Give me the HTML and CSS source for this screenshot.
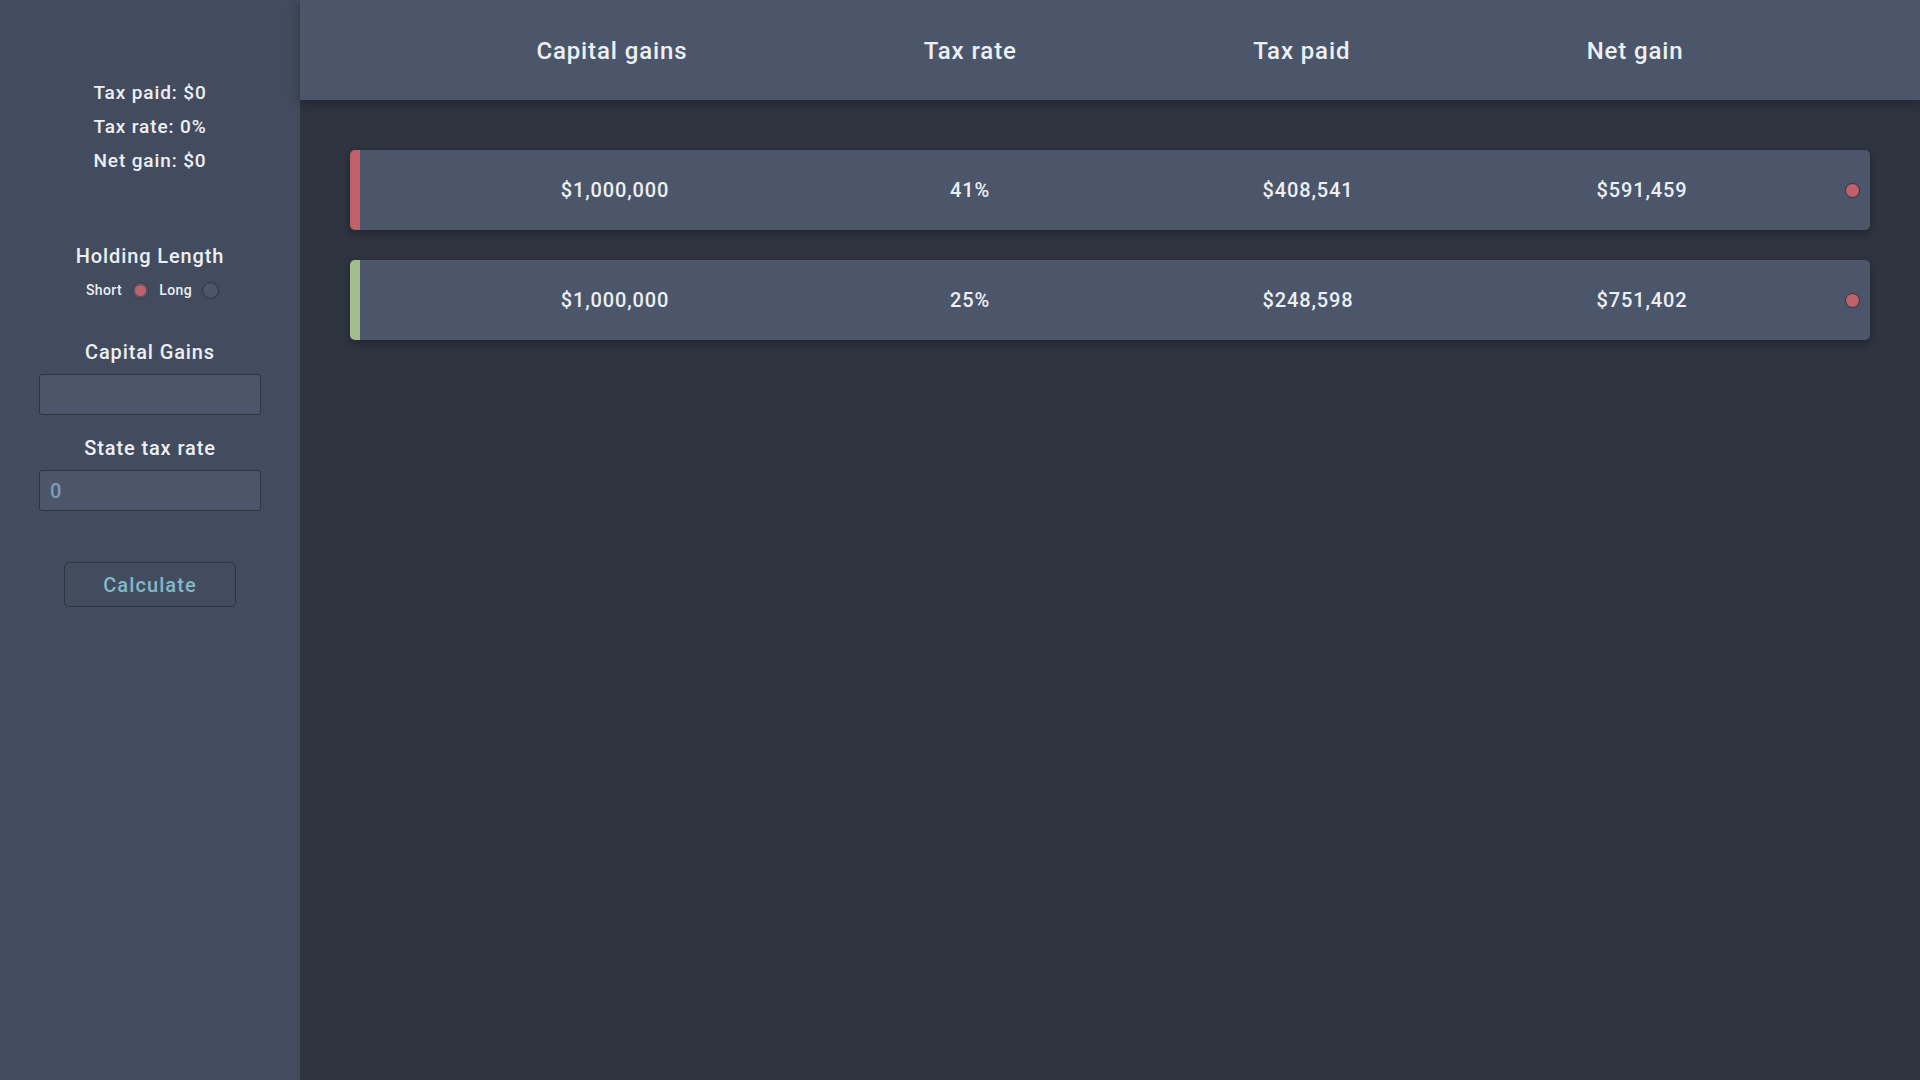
FILE: index.html
```html
<!DOCTYPE html>
<html lang="en">
<head>
<meta charset="utf-8">
<title>Capital Gains Calculator</title>
<link rel="stylesheet" href="styles.css">
</head>
<body>
<div class="app">
  <aside class="sidebar">
    <div class="stats">
      <p class="stat">Tax paid: $0</p>
      <p class="stat">Tax rate: 0%</p>
      <p class="stat">Net gain: $0</p>
    </div>
    <h3 class="label holding-title">Holding Length</h3>
    <div class="radio-row">
      <span class="radio-text">Short</span>
      <span class="radio checked"></span>
      <span class="radio-text">Long</span>
      <span class="radio"></span>
    </div>
    <h3 class="label gains-title">Capital Gains</h3>
    <input class="field" type="text" value="">
    <h3 class="label state-title">State tax rate</h3>
    <input class="field" type="text" value="0">
    <button class="calc-btn" type="button">Calculate</button>
  </aside>
  <main class="content">
    <header class="table-head">
      <span class="head-cell">Capital gains</span>
      <span class="head-cell">Tax rate</span>
      <span class="head-cell">Tax paid</span>
      <span class="head-cell">Net gain</span>
    </header>
    <section class="rows">
      <div class="row short">
        <span class="cell">$1,000,000</span>
        <span class="cell">41%</span>
        <span class="cell">$408,541</span>
        <span class="cell">$591,459</span>
        <span class="dot-cell"><span class="dot"></span></span>
      </div>
      <div class="row long">
        <span class="cell">$1,000,000</span>
        <span class="cell">25%</span>
        <span class="cell">$248,598</span>
        <span class="cell">$751,402</span>
        <span class="dot-cell"><span class="dot"></span></span>
      </div>
    </section>
  </main>
</div>
</body>
</html>
```

FILE: styles.css
```css
* { box-sizing: border-box; }

html, body {
  margin: 0;
  padding: 0;
  height: 100%;
}

body {
  font-family: Roboto, "Liberation Sans", sans-serif;
  font-weight: 500;
  letter-spacing: 0.055em;
  color: #eceff4;
  background: #2e3440;
}

.app {
  display: flex;
  height: 100vh;
}

/* Sidebar */
.sidebar {
  width: 300px;
  flex: 0 0 300px;
  background: #434c5e;
  display: flex;
  flex-direction: column;
  align-items: center;
  padding-top: 76px;
}

.stats {
  display: flex;
  flex-direction: column;
  align-items: center;
}

.stat {
  margin: 0;
  font-size: 19px;
  line-height: 34px;
}

.label {
  margin: 0;
  font-size: 20px;
  font-weight: 500;
  line-height: 26px;
}

.holding-title { margin-top: 65px; }
.gains-title { margin-top: 39px; }
.state-title { margin-top: 20px; }

.radio-row {
  margin-top: 11px;
  height: 20px;
  display: flex;
  align-items: center;
  gap: 10px;
  padding-left: 5px;
}

.radio-text {
  font-size: 14px;
  letter-spacing: 0.03em;
}

.radio {
  width: 17px;
  height: 17px;
  border-radius: 50%;
  border: 1px solid #2e3440;
  background: #4c566a;
}

.radio.checked {
  background: #bf616a;
  box-shadow: inset 0 0 0 2px #4c566a;
}

.field {
  margin-top: 9px;
  width: 222px;
  height: 41px;
  background: #4c566a;
  border: 1px solid #2e3440;
  border-radius: 3px;
  padding: 0 10px;
  font-family: Roboto, "Liberation Sans", sans-serif;
  font-weight: 500;
  font-size: 20px;
  letter-spacing: 0.055em;
  color: #7f9bbc;
  outline: none;
}

.calc-btn {
  margin-top: 51px;
  width: 172px;
  height: 45px;
  background: transparent;
  border: 1px solid #2e3440;
  border-radius: 5px;
  font-family: Roboto, "Liberation Sans", sans-serif;
  font-weight: 500;
  font-size: 20px;
  letter-spacing: 0.055em;
  color: #84b8c9;
  cursor: pointer;
}

/* Main */
.content {
  flex: 1;
  display: flex;
  flex-direction: column;
  background: #2e3440;
}

.table-head {
  height: 100px;
  flex: 0 0 100px;
  padding-top: 2px;
  background: #4c566a;
  display: flex;
  align-items: center;
  justify-content: space-evenly;
  box-shadow: 0 2px 12px rgba(0, 0, 0, 0.35);
  position: relative;
  z-index: 1;
}

.head-cell {
  font-size: 24px;
  font-weight: 500;
}

.rows {
  padding: 50px 50px;
  display: flex;
  flex-direction: column;
  gap: 30px;
}

.row {
  height: 80px;
  background: #4c566a;
  border-radius: 5px;
  border-left: 10px solid #bf616a;
  padding-right: 10px;
  display: grid;
  grid-template-columns: 510px 200px 476px 192px 1fr;
  align-items: center;
  box-shadow: 0 3px 8px rgba(0, 0, 0, 0.3);
}

.row.long { border-left-color: #a3be8c; }

.cell {
  text-align: center;
  font-size: 20px;
}

.dot-cell {
  display: flex;
  justify-content: flex-end;
}

.dot {
  width: 15px;
  height: 15px;
  border-radius: 50%;
  background: #bf616a;
  border: 1px solid #2e3440;
}
```
